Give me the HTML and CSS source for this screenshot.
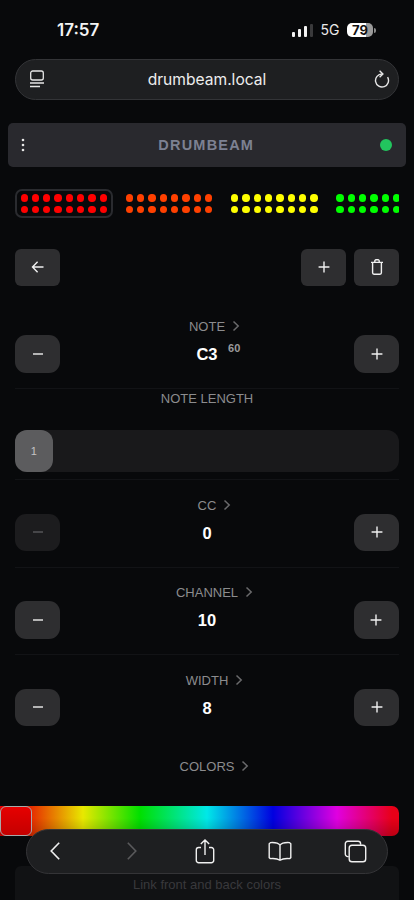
FILE: index.html
```html
<!DOCTYPE html>
<html lang="en">
<head>
<meta charset="utf-8">
<title>drumbeam.local</title>
<link rel="stylesheet" href="styles.css">
</head>
<body>
<svg class="defs" width="0" height="0" aria-hidden="true">
  <symbol id="plus" viewBox="0 0 16 16"><path d="M8 1.800v12.400M1.800 8h12.400" fill="none" stroke="currentColor" stroke-width="1.600"/></symbol>
  <symbol id="minus" viewBox="0 0 16 16"><path d="M2.300 8h11.400" fill="none" stroke="currentColor" stroke-width="1.600"/></symbol>
  <symbol id="chev" viewBox="0 0 8 12"><path d="M1.500 1.500 6.200 6l-4.700 4.500" fill="none" stroke="currentColor" stroke-width="1.500"/></symbol>
</svg>
<div class="page">
  <div class="status">
    <span class="time">17:57</span>
    <div class="status-right">
      <div class="signal"><i class="s1"></i><i class="s2"></i><i class="s3"></i><i class="s4"></i></div>
      <span class="net">5G</span>
      <div class="battery"><span>79</span></div>
      <i class="nub"></i>
    </div>
  </div>

  <div class="urlbar">
    <svg class="url-icon" width="16" height="18" viewBox="0 0 16 18"><rect x="1.700" y="1" width="12.600" height="9" rx="2" fill="none" stroke="#e6e6e6" stroke-width="1.300"/><path d="M1 13h14M1 16.500h10" stroke="#e6e6e6" stroke-width="1.300" fill="none"/></svg>
    <span class="url">drumbeam.local</span>
    <svg class="url-icon end" width="16" height="18" viewBox="0 0 16 18"><path d="M8 4A6.500 6.500 0 1 0 13.600 7.200" fill="none" stroke="#e6e6e6" stroke-width="1.400"/><path d="M5.600 .8 8.900 4 5.600 7.200" fill="none" stroke="#e6e6e6" stroke-width="1.400"/></svg>
  </div>

  <header class="appbar">
    <svg width="4" height="14" viewBox="0 0 4 14"><circle cx="2" cy="2" r="1.300" fill="#e8e8e8"/><circle cx="2" cy="7" r="1.300" fill="#e8e8e8"/><circle cx="2" cy="12" r="1.300" fill="#e8e8e8"/></svg>
    <span class="brand">DRUMBEAM</span>
    <i class="online"></i>
  </header>

  <div class="patterns">
    <div class="pattern selected c-red"><i></i><i></i><i></i><i></i><i></i><i></i><i></i><i></i><i></i><i></i><i></i><i></i><i></i><i></i><i></i><i></i></div>
    <div class="pattern c-orange"><i></i><i></i><i></i><i></i><i></i><i></i><i></i><i></i><i></i><i></i><i></i><i></i><i></i><i></i><i></i><i></i></div>
    <div class="pattern c-yellow"><i></i><i></i><i></i><i></i><i></i><i></i><i></i><i></i><i></i><i></i><i></i><i></i><i></i><i></i><i></i><i></i></div>
    <div class="pattern c-green"><i></i><i></i><i></i><i></i><i></i><i></i><i></i><i></i><i></i><i></i><i></i><i></i><i></i><i></i><i></i><i></i></div>
  </div>

  <div class="toolbar">
    <button class="btn square"><svg width="14" height="14" viewBox="0 0 14 14"><path d="M12.500 7h-11M6.600 1.800 1.500 7l5.100 5.200" fill="none" stroke="#f0f0f0" stroke-width="1.400"/></svg></button>
    <div class="toolbar-right">
      <button class="btn square"><svg width="14" height="14"><use href="#plus"/></svg></button>
      <button class="btn square"><svg width="14" height="16" viewBox="0 0 14 16"><path d="M1 3.400h12M2.600 3.400v10.400a1.400 1.400 0 0 0 1.400 1.400h6a1.400 1.400 0 0 0 1.400-1.400V3.400M4.800 3.400V1.900A1.100 1.100 0 0 1 5.900.8h2.200a1.100 1.100 0 0 1 1.100 1.100v1.500" fill="none" stroke="#f0f0f0" stroke-width="1.400"/></svg></button>
    </div>
  </div>

  <section class="section first">
    <div class="label-row"><span class="label">NOTE<svg class="chev" width="8" height="12"><use href="#chev"/></svg></span></div>
    <div class="row">
      <button class="btn"><svg width="14" height="14"><use href="#minus"/></svg></button>
      <span class="value">C3<sup class="midi">60</sup></span>
      <button class="btn"><svg width="14" height="14"><use href="#plus"/></svg></button>
    </div>
  </section>

  <section class="section length">
    <div class="label-row"><span class="label">NOTE LENGTH</span></div>
    <div class="slider"><div class="thumb">1</div></div>
  </section>

  <section class="section">
    <div class="label-row"><span class="label">CC<svg class="chev" width="8" height="12"><use href="#chev"/></svg></span></div>
    <div class="row">
      <button class="btn off"><svg width="14" height="14"><use href="#minus"/></svg></button>
      <span class="value">0</span>
      <button class="btn"><svg width="14" height="14"><use href="#plus"/></svg></button>
    </div>
  </section>

  <section class="section">
    <div class="label-row"><span class="label">CHANNEL<svg class="chev" width="8" height="12"><use href="#chev"/></svg></span></div>
    <div class="row">
      <button class="btn"><svg width="14" height="14"><use href="#minus"/></svg></button>
      <span class="value">10</span>
      <button class="btn"><svg width="14" height="14"><use href="#plus"/></svg></button>
    </div>
  </section>

  <section class="section last">
    <div class="label-row"><span class="label">WIDTH<svg class="chev" width="8" height="12"><use href="#chev"/></svg></span></div>
    <div class="row">
      <button class="btn"><svg width="14" height="14"><use href="#minus"/></svg></button>
      <span class="value">8</span>
      <button class="btn"><svg width="14" height="14"><use href="#plus"/></svg></button>
    </div>
  </section>

  <section class="colors">
    <div class="label-row"><span class="label">COLORS<svg class="chev" width="8" height="12"><use href="#chev"/></svg></span></div>
    <div class="hue"><div class="hue-thumb"></div></div>
    <div class="link">Link front and back colors</div>
  </section>

  <nav class="dock">
    <span class="slot"><svg width="10" height="18" viewBox="0 0 10 18"><path d="M9.200 .8 1.200 9l8 8.200" fill="none" stroke="#f0f0f0" stroke-width="1.600"/></svg></span>
    <span class="slot"><svg width="14" height="18" viewBox="0 0 14 18"><path d="M4.800 .8l8 8.200-8 8.200" fill="none" stroke="#5a5a5c" stroke-width="1.600"/></svg></span>
    <span class="slot"><svg width="20" height="25" viewBox="0 0 20 25"><path d="M6 8.500H3.600A2.300 2.300 0 0 0 1.300 10.800v10.600a2.300 2.300 0 0 0 2.300 2.300h12.800a2.300 2.300 0 0 0 2.300-2.300V10.800a2.300 2.300 0 0 0-2.300-2.300H14M10 16V1.200M5.800 5 10 1l4.200 4" fill="none" stroke="#f0f0f0" stroke-width="1.400"/></svg></span>
    <span class="slot"><svg width="24" height="20" viewBox="0 0 24 20"><path d="M12 4.200C10.400 2 7.400 1.300 2.500 1.600L1.200 2.800V16.600l1 1c4.600-.4 7.500 0 9.800 1.600 2.300-1.600 5.200-2 9.800-1.600l1-1V2.800l-1.300-1.200C16.600 1.300 13.600 2 12 4.200ZM12 4.200V18.500" fill="none" stroke="#f0f0f0" stroke-width="1.400"/></svg></span>
    <span class="slot"><svg width="23" height="23" viewBox="0 0 23 23"><path d="M4.700 16.600H3.800a2.500 2.500 0 0 1-2.500-2.500V3.800a2.500 2.500 0 0 1 2.500-2.500h10.300a2.500 2.500 0 0 1 2.500 2.500v.9" fill="none" stroke="#f0f0f0" stroke-width="1.400"/><rect x="5.200" y="5.200" width="16.500" height="16.500" rx="2.800" fill="none" stroke="#f0f0f0" stroke-width="1.400"/></svg></span>
  </nav>
</div>
</body>
</html>
```
FILE: styles.css
```css
* { box-sizing: border-box; }
html, body { margin: 0; height: 900px; overflow: hidden; background: #08090b; }
body { font-family: "Liberation Sans", Arial, sans-serif; color: #fff; }
.defs { position: absolute; }
.page { position: relative; height: 900px; overflow: hidden; }
i { display: block; }

.status { height: 59px; padding: 20px 38px 0 57px; display: flex; justify-content: space-between; align-items: flex-start; font-family: Inter, sans-serif; }
.time { font-size: 17px; font-weight: 600; line-height: 20px; color: #f4f4f4; }
.status-right { display: flex; align-items: center; height: 20px; }
.signal { display: flex; align-items: flex-end; gap: 2.700px; height: 13px; margin-right: 8px; }
.signal i { width: 3px; border-radius: 1px; background: #f2f2f2; }
.s1 { height: 5px; } .s2 { height: 8px; } .s3 { height: 10.500px; }
.signal .s4 { height: 13px; background: #3a3a3c; }
.net { font-size: 14px; line-height: 20px; color: #eaeaea; margin-right: 7.500px; }
.battery { width: 26px; height: 14px; border-radius: 5px; background: linear-gradient(90deg, #fff 0 72%, #9a9a9a 72%); color: #111; font-size: 13px; font-weight: 700; line-height: 14px; text-align: center; }
.nub { width: 2px; height: 5px; margin-left: 1px; background: #8a8a8a; border-radius: 0 2px 2px 0; }

.urlbar { height: 40.500px; margin: 0 15px; padding: 0 8px; border: 1px solid #333437; border-radius: 21px; background: #1e1f21; display: grid; grid-template-columns: 1fr auto 1fr; align-items: center; font-family: Inter, sans-serif; }
.url { font-size: 15.600px; color: #ededed; }
.url-icon { flex: none; margin-left: 5px; }
.url-icon.end { justify-self: end; margin-left: 0; }

.appbar { height: 44px; margin: 23.500px 8px 0; padding: 0 14px 0 12.500px; border-radius: 5px; background: #29292e; display: grid; grid-template-columns: 1fr auto 1fr; align-items: center; }
.brand { font-size: 14.500px; font-weight: 700; letter-spacing: 1.200px; color: #7d8192; }
.online { width: 12px; height: 12px; border-radius: 50%; background: #22c55e; justify-self: end; }

.patterns { margin: 22px 15px 0; display: flex; gap: 7.830px; overflow: hidden; }
.pattern { flex: none; width: 97.500px; height: 29px; padding: 3px 3px 3px 3.500px; border: 2px solid transparent; border-radius: 7px; display: grid; grid-template-columns: repeat(8, 7.330px); grid-auto-rows: 7.330px; gap: 4px; align-content: center; }
.pattern i { border-radius: 50%; background: currentColor; }
.selected { border-color: #2a2b2f; }
.c-red { color: #ff0000; } .c-orange { color: #ff4000; } .c-yellow { color: #ffff00; } .c-green { color: #00ff00; }

.toolbar { margin: 30.500px 15px 0; display: flex; justify-content: space-between; }
.toolbar-right { display: flex; gap: 8px; }
.btn { width: 45px; height: 37.500px; padding: 0; border: 0; border-radius: 11px; background: #2e2e30; color: #f0f0f0; display: flex; align-items: center; justify-content: center; }
.btn.square { border-radius: 6px; }
.btn.off { background: #1c1c1e; color: #5a5a5c; }

.section { height: 87.500px; margin: 0 15px; padding-top: 16.500px; border-bottom: 1px solid #121316; }
.first { margin-top: 15.700px; }
.section.length { height: 91px; padding-top: .700px; }
.section.last { border-bottom: 0; }
.label-row { height: 16px; display: flex; justify-content: center; align-items: flex-start; }
.label { position: relative; font-size: 13px; line-height: 18px; color: #8c8c8e; }
.chev { position: absolute; left: calc(100% + 7px); top: 2px; color: #6a6a6c; }
.row { margin-top: 1px; display: flex; align-items: center; justify-content: space-between; }
.value { position: relative; padding-top: 2px; font-size: 16.500px; font-weight: 700; color: #fff; }
.midi { position: absolute; left: calc(100% + 10.500px); top: -2.500px; font-size: 11px; line-height: 14px; color: #9a9a9c; }

.slider { height: 41.700px; margin-top: 24px; border-radius: 12px; background: #19191b; }
.thumb { width: 37.500px; height: 100%; border-radius: 12px; background: #5c5c5e; color: #c4c4c4; font-size: 11px; display: flex; align-items: center; justify-content: center; }

.colors { padding-top: 15.500px; }
.hue { position: relative; height: 30.500px; margin: 31.500px 15px 0 0; border-radius: 0 7px 7px 0;
  background: linear-gradient(180deg, transparent 40%, rgba(0,0,0,.2)), linear-gradient(90deg, #e60000 19px, #e8e800 83px, #00e000 140px, #00e8e8 207px, #0000e0 273px, #e000e0 337px, #e80018 392px); }
.hue-thumb { position: absolute; left: 0; top: 0; width: 31.500px; height: 100%; border: 1.500px solid #a8a8a8; border-radius: 6px; background: linear-gradient(180deg, #e60000, #c40000); }
.link { height: 44px; margin: 30px 15px 0; padding-top: 10px; border-radius: 6px; background: #111214; color: #39393c; font-size: 13px; line-height: 18px; text-align: center; }

.dock { position: absolute; left: 26px; top: 829px; width: 361.500px; height: 44.500px; padding-left: 3px; border: 1px solid #343437; border-radius: 23px; background: #1e1f21; display: flex; align-items: center; gap: 25.100px; }
.slot { flex: none; width: 50px; display: flex; justify-content: center; }
```
